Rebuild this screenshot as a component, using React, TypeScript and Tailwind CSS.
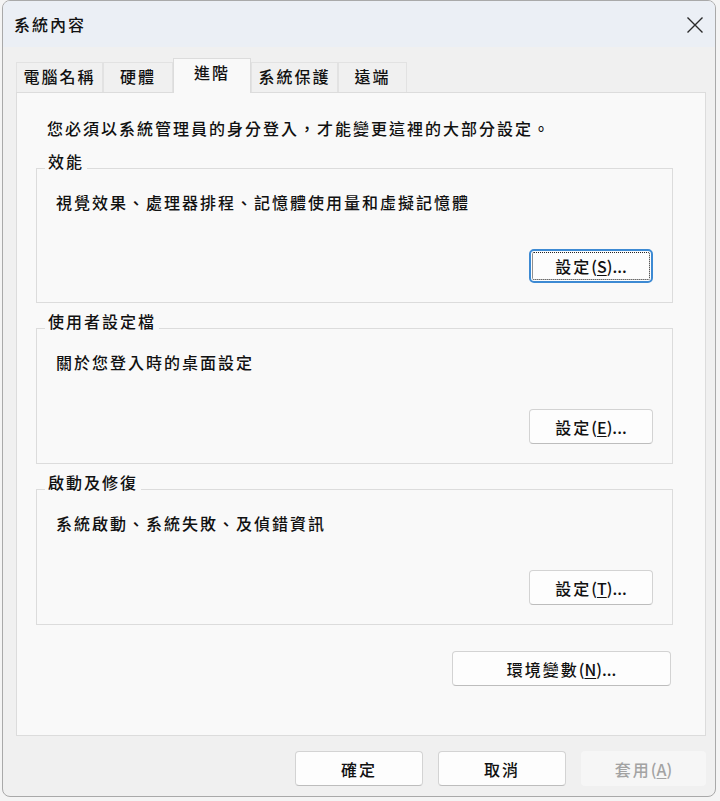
import React from "react";

const font = { fontFamily: '"Noto Sans CJK TC", "Noto Sans", sans-serif' };

function Btn({
  children,
  w,
  focused,
  disabled,
}: {
  children: React.ReactNode;
  w: string;
  focused?: boolean;
  disabled?: boolean;
}) {
  if (disabled) {
    return (
      <div
        className={`${w} h-[35px] flex items-center justify-center bg-[#f6f6f6] text-[#a3a3a3] text-[16px] tracking-[2px] rounded-[4px]`}
      >
        {children}
      </div>
    );
  }
  if (focused) {
    return (
      <div
        className={`${w} h-[34px] relative flex items-center justify-center bg-[#fdfdfd] border-2 border-[#3d8ad3] rounded-[5px] text-[16px] tracking-[2px] text-[#111]`}
      >
        <span className="absolute inset-[1px] border border-dotted border-[#222] rounded-[2px]" />
        {children}
      </div>
    );
  }
  return (
    <div
      className={`${w} h-[35px] flex items-center justify-center bg-[#fdfdfd] border border-[#d3d3d3] border-b-[#bdbdbd] rounded-[4px] text-[16px] tracking-[2px] text-[#111]`}
    >
      {children}
    </div>
  );
}

function Mn({ pre, k, post }: { pre: string; k: string; post: string }) {
  return (
    <span>
      {pre}
      <span className="tracking-[0px]">
        (<u className="underline-offset-2">{k}</u>){post}
      </span>
    </span>
  );
}

function Group({
  title,
  desc,
  btn,
  focused,
}: {
  title: string;
  desc: string;
  btn: React.ReactNode;
  focused?: boolean;
}) {
  return (
    <div className="relative w-[637px] border border-[#dcdcdc] pt-[23px] pb-[19px] pl-[19px] pr-[19px]">
      <span className="absolute left-[8px] top-[-18px] px-[3px] bg-[#f9f9f9] leading-[20px] text-[16px] tracking-[2px] text-[#111]">
        {title}
      </span>
      <div className="leading-[20px] text-[16px] tracking-[2px] text-[#111]">{desc}</div>
      <div className="flex justify-end mt-[37px]">
        <Btn w="w-[124px]" focused={focused}>
          {btn}
        </Btn>
      </div>
    </div>
  );
}

export default function App() {
  const tabs = [
    { label: "電腦名稱", w: "w-[87px]" },
    { label: "硬體", w: "w-[70px]" },
    { label: "進階", w: "w-[78px]", sel: true },
    { label: "系統保護", w: "w-[87px]" },
    { label: "遠端", w: "w-[69px]" },
  ];
  return (
    <div className="w-[720px] h-[801px] bg-[#f4f4f4] overflow-hidden font-medium" style={font}>
      <div className="ml-[2px] w-[714px] h-[797px] border border-[#a9a9a9] rounded-[8px] overflow-hidden bg-[#f0f0f0] flex flex-col">
        <div className="h-[46px] bg-[#ebeff5] flex items-center justify-between pl-[11px] pr-[10px]">
          <span className="text-[16px] tracking-[2px] text-[#111]">系統內容</span>
          <svg width="20" height="20" viewBox="0 0 20 20" className="mt-[1px]">
            <path d="M2.5 2.5 L17.5 17.5 M17.5 2.5 L2.5 17.5" stroke="#2a2a2a" strokeWidth="1.4" fill="none" />
          </svg>
        </div>
        <div className="flex items-end ml-[13px] mt-[11px] relative z-10">
          {tabs.map((t) =>
            t.sel ? (
              <div
                key={t.label}
                className={`${t.w} h-[35px] -mb-px bg-[#f9f9f9] border border-b-0 border-[#dcdcdc] flex items-start justify-center pt-[1px] text-[16px] tracking-[2px] text-[#111]`}
              >
                {t.label}
              </div>
            ) : (
              <div
                key={t.label}
                className={`${t.w} h-[30px] bg-[#f0f0f0] border border-b-0 border-[#e2e2e2] flex items-start justify-center pt-[1px] text-[16px] tracking-[2px] text-[#111]`}
              >
                {t.label}
              </div>
            )
          )}
        </div>
        <div className="ml-[13px] w-[690px] h-[644px] bg-[#f9f9f9] border border-[#dcdcdc] pl-[19px] pt-[25px]">
          <div className="pl-[11px] leading-[20px] text-[16px] tracking-[2px] text-[#111]">
            您必須以系統管理員的身分登入，才能變更這裡的大部分設定。
          </div>
          <div className="mt-[30px] flex flex-col gap-[25px]">
            <Group
              title="效能"
              desc="視覺效果、處理器排程、記憶體使用量和虛擬記憶體"
              focused
              btn={<Mn pre="設定" k="S" post="..." />}
            />
            <Group
              title="使用者設定檔"
              desc="關於您登入時的桌面設定"
              btn={<Mn pre="設定" k="E" post="..." />}
            />
            <Group
              title="啟動及修復"
              desc="系統啟動、系統失敗、及偵錯資訊"
              btn={<Mn pre="設定" k="T" post="..." />}
            />
          </div>
          <div className="w-[635px] flex justify-end mt-[26px]">
            <Btn w="w-[219px]">
              <Mn pre="環境變數" k="N" post="..." />
            </Btn>
          </div>
        </div>
        <div className="flex justify-end gap-[15px] mt-[15px] mr-[9px]">
          <Btn w="w-[128px]">確定</Btn>
          <Btn w="w-[128px]">取消</Btn>
          <Btn w="w-[125px]" disabled>
            <Mn pre="套用" k="A" post="" />
          </Btn>
        </div>
      </div>
    </div>
  );
}
